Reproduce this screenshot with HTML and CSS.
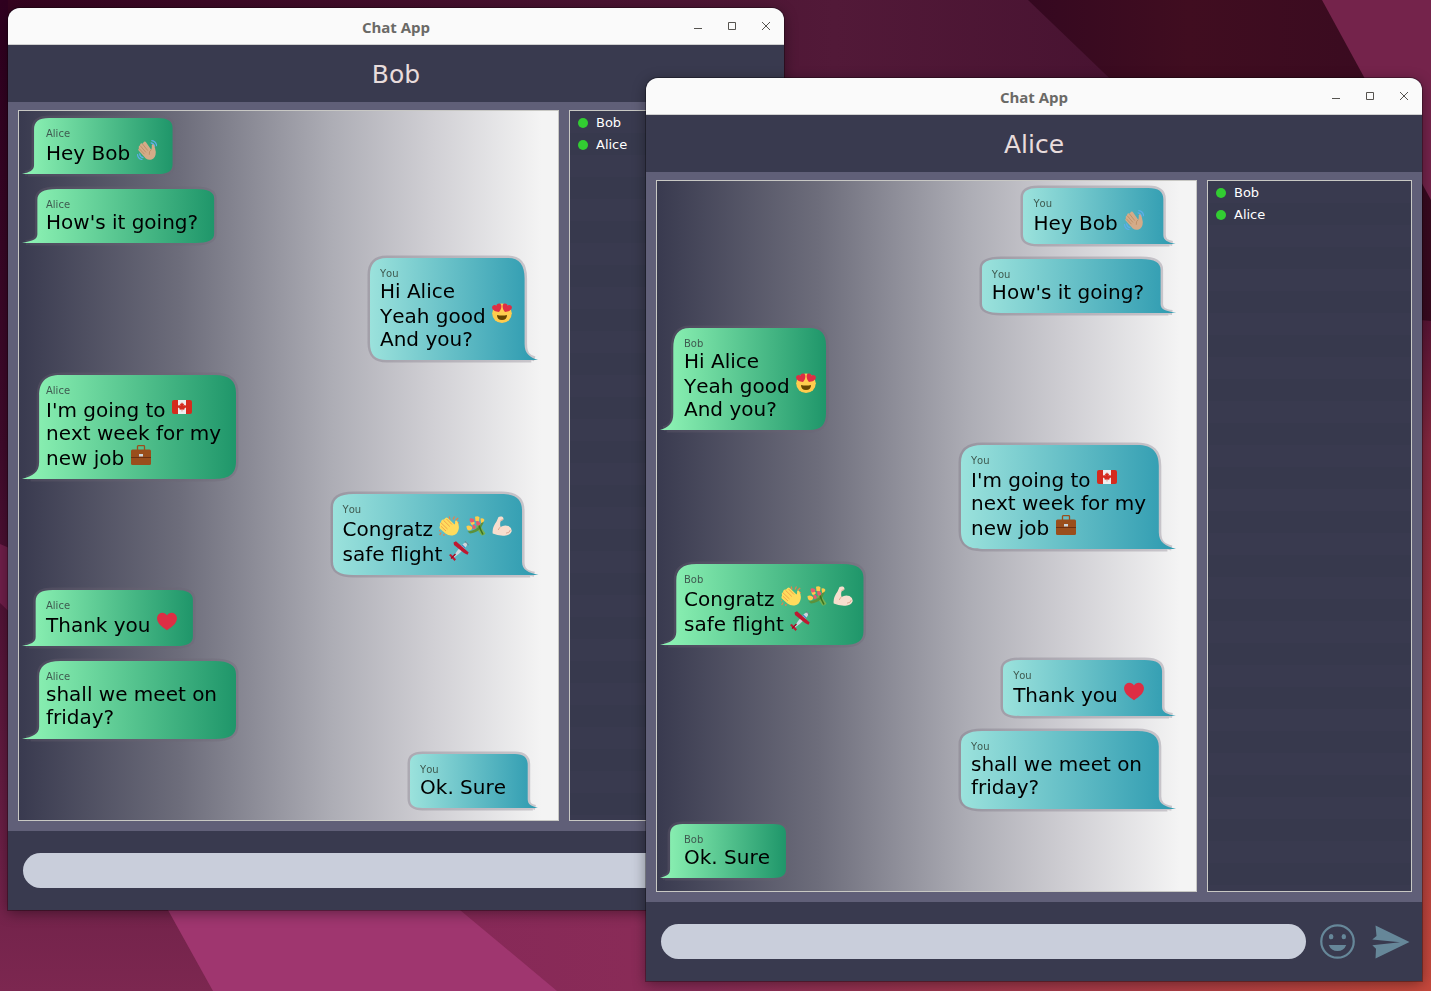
FILE: index.html
```html
<!DOCTYPE html>
<html lang="en">
<head>
<meta charset="utf-8">
<meta name="viewport" content="width=device-width, initial-scale=1">
<title>Chat App</title>
<link rel="stylesheet" href="styles.css">
</head>
<body>
<svg class="sprite" width="0" height="0" aria-hidden="true">
  <defs>
    <linearGradient id="green"><stop offset="0" stop-color="#90f5b6"/><stop offset="1" stop-color="#1f966a"/></linearGradient>
    <linearGradient id="blue"><stop offset="0" stop-color="#9be2dc"/><stop offset="1" stop-color="#2d9ab0"/></linearGradient>
  </defs>
  <symbol id="shape-in" viewBox="0 0 100 100" preserveAspectRatio="none" overflow="visible">
    <path class="halo" d="M2 99C6 97 8 94 8 84V20C8 7 11 0 18 0H90C97 0 100 6 100 17V83C100 95 97 100 90 100H4"/>
    <path d="M0 100C5 97 8 94 8 84V20C8 7 11 0 18 0H90C97 0 100 6 100 17V83C100 95 97 100 90 100Z" fill="url(#green)"/>
  </symbol>
  <symbol id="shape-out" viewBox="0 0 100 100" preserveAspectRatio="none" overflow="visible">
    <path class="halo" d="M98 99C94 97 92 94 92 84V20C92 7 89 0 82 0H10C3 0 0 6 0 17V83C0 95 3 100 10 100H96"/>
    <path d="M100 100C95 97 92 94 92 84V20C92 7 89 0 82 0H10C3 0 0 6 0 17V83C0 95 3 100 10 100Z" fill="url(#blue)"/>
  </symbol>
  <symbol id="wave" viewBox="0 0 20 20">
    <g fill="none" stroke="#5dadec" stroke-width="1.2" stroke-linecap="round"><path d="M14 2.800Q17 3.400 17.600 6.400M14.800 .6Q19 1.200 19.600 5.600M.5 14.500Q1 18.900 5 19.500M2.600 13.800Q3 16.800 6 17.600"/></g>
    <path d="M1.400 10.200Q1 9 2 8.500L1.700 7Q1.700 5.700 3 5.600L3.300 4Q4.300 2.700 5.500 3.700L7 1.800Q8.400 1 9 2.300L14.200 9.800Q15 7.800 14.700 5.300Q15.300 3.800 16.800 4.700Q18.400 8 18.800 12Q18.800 17.700 14.600 19.600Q11.300 20.400 8.800 18.500Z" fill="#d4ab88"/>
    <path d="M3.300 5.800L9 12.500M5.500 4L10.800 10.600M2.200 8.700L7.500 14.200M14.200 9.800Q11.800 11 12.300 14.800" fill="none" stroke="#b78b60" stroke-width=".8"/>
  </symbol>
  <symbol id="hearteyes" viewBox="0 0 20 20">
    <circle cx="10" cy="10.200" r="9.800" fill="#ffcc4d"/>
    <path d="M7 9C3.500 8.800 .6 7.300 .1 4.800C-.3 2.200 2.800 1 4.400 2.600C4.700 .2 8.300-.4 9.200 2C9.900 4.400 8.700 7.200 7 9Z" fill="#dd2e44"/>
    <path d="M13 9C16.500 8.800 19.400 7.300 19.900 4.800C20.300 2.200 17.200 1 15.600 2.600C15.300 .2 11.700-.4 10.800 2C10.100 4.400 11.300 7.200 13 9Z" fill="#dd2e44"/>
    <path d="M5 12Q10 13.200 15 12Q15 17 10 17T5 12Z" fill="#664500"/>
  </symbol>
  <symbol id="canada" viewBox="0 0 20 20">
    <rect y="3" width="20" height="14" rx="2" fill="#d52b1e"/><path d="M6 3h8v14H6z" fill="#eee"/>
    <path d="M10 5.200l1 1.700 1-.4-.3 2.400 1.200-1.100 .3 .7 1.300-.2-.5 1.300 .5 .4-2.300 1.800 .2 1-2.200-.3V14.500h-.4V12.500l-2.200 .3 .2-1-2.300-1.800 .5-.4-.5-1.300 1.300 .2 .3-.7 1.200 1.100L8 6.500l1 .4Z" fill="#d52b1e"/>
  </symbol>
  <symbol id="briefcase" viewBox="0 0 20 20">
    <path d="M6.500 5V1.500Q6.500 .7 7.300 .7H12.700Q13.500 .7 13.500 1.500V5" fill="none" stroke="#9a4e1c" stroke-width="1.300"/>
    <rect y="4.500" width="20" height="15.500" rx="1.500" fill="#9a4e1c"/><path d="M0 12h20v1H0z" fill="#6b2f12"/><rect x="8" y="9" width="4" height="2.500" fill="#ccd6dd"/>
  </symbol>
  <symbol id="clap" viewBox="0 0 20 20">
    <path d="M11 3.500L10.200 .5M14 3.400L15.500 .4M16.500 4.500L19.200 2M17.500 7L20 6.500M1 14.500L0 15M2.200 16.500L.6 19M5 18L4.800 20" stroke="#e8804c" stroke-width="1.200"/>
    <path d="M1 8.500Q.3 7 1.800 6.500L2.500 4.500Q3.500 3 5 3.600L6.500 2Q8 1 9 2.200L15.500 8.500Q16.300 7.500 16.100 5.300Q16.800 3.800 18.200 5Q20.400 9 19.700 13Q18.800 18.500 13.500 19.500Q9.500 20 6.500 17.500L.8 12.500Q0 10.500 1 10Z" fill="#ffdc5d"/>
    <path d="M2 6.800L8.500 13M4.500 4.300L10.800 10.500M7.500 3L13 8.500M2 10.300L7 15" stroke="#ef9645" stroke-width=".8"/>
  </symbol>
  <symbol id="bouquet" viewBox="0 0 20 20">
    <path d="M11 8L14 8.500Q16 13 19.500 17.500Q18 20 15.500 19.500Q12.500 15 10 12Z" fill="#77b255"/>
    <path d="M1.500 15.500Q8 15 13 10.500L17 4.500L17.500 7L14.500 12.500Q10 17 4 17.500Z" fill="#5c913b"/>
    <path d="M13 9.500Q14.500 14 17 18.500" stroke="#3e721d" stroke-width="1.500" fill="none"/>
    <path d="M9 .8Q11.500-.5 13.500 1.200L13 5.500L9.500 5ZM14.500 2.500Q17.500 1.500 18.500 4Q18 6.500 15 7ZM.5 10Q3.500 8.500 6 11Q6.500 14.500 3 14.500Q.5 14 .5 10ZM4.500 5Q7 4 9 7L6.500 9.500Q4 8.500 4.500 5Z" fill="#ffcc4d"/>
    <path d="M3.800 2.500Q7 1.500 8.500 4Q8.200 6.500 5.500 6.500Q3 5.500 3.800 2.500ZM10.500 5Q13.500 4.500 14.500 7.500Q14 10 11.500 9.500Q9.500 8.500 10.500 5ZM6.500 8.500Q10 8.500 9.800 12Q8 13.500 6.500 12.500Z" fill="#ea596e"/>
  </symbol>
  <symbol id="bicep" viewBox="0 0 20 20">
    <path d="M4.500 5.500L6.500 1Q8 0 10 .6Q12 1.600 11.300 3.700L8.500 5.600Q7.800 8 8.500 11Q12 8.500 16.500 10Q20.200 12 19.600 15.500Q18 19.500 12.500 19.700Q5.500 20 .7 17.600Q-.2 12 4.500 5.500Z" fill="#f7dece"/>
    <path d="M8.500 4.600L11 3.500M8.500 11Q6.700 12 6.300 14M14 17.200Q18 16.800 18.300 14" fill="none" stroke="#e0aa94" stroke-width="1"/>
  </symbol>
  <symbol id="airplane" viewBox="0 0 20 20">
    <path d="M3 18Q8 9 14 3Q17.500 .5 18.300 2.200Q18.500 5 15.500 7.500Q10 13.500 3 18Z" fill="#ccd6dd"/>
    <path d="M4.500 1.500L7 .3L19.700 11.500L18.500 13.800L15 12L5 4ZM0 14L1.800 13L7 18.200L5.500 20Z" fill="#be1931"/>
    <path d="M13 4L16 7" stroke="#4289c1" stroke-width="1.500"/><path d="M15.800 .3L19.700 4" stroke="#66757f" stroke-width="1"/>
    <path d="M2 17.500L6.500 13" stroke="#a0041e" stroke-width="1.200"/>
  </symbol>
  <symbol id="heart" viewBox="0 0 20 20">
    <path d="M10 18.200C4 14.500-.4 10.500 .1 5.500C.7 .4 7.500-1 10 3.500C12.500-1 19.300 .4 19.900 5.500C20.400 10.500 16 14.500 10 18.200Z" fill="#dd2e44"/>
  </symbol>
  <symbol id="smile" viewBox="0 0 36 36">
    <circle cx="18" cy="18" r="16.700" fill="none" stroke="currentColor" stroke-width="2.300"/>
    <ellipse cx="11.500" cy="13" rx="2.300" ry="2.700" fill="currentColor"/><ellipse cx="24.500" cy="13" rx="2.300" ry="2.700" fill="currentColor"/>
    <path d="M9 21.500H27Q24.500 27.800 18 27.800T9 21.500Z" fill="currentColor"/>
  </symbol>
  <symbol id="send" viewBox="0 0 38 34">
    <path d="M3.500 .5L37.500 17L3.500 33.500L4 23.800L.3 20.300L28 17.300L.3 14.500L4.500 11Z" fill="currentColor"/>
  </symbol>
</svg>

<svg class="wallpaper" viewBox="0 0 1431 991" preserveAspectRatio="none" aria-hidden="true">
  <defs>
    <linearGradient id="base" x1="0" y1="0" x2="0" y2="1"><stop offset="0" stop-color="#2f001f"/><stop offset=".45" stop-color="#410b2c"/><stop offset="1" stop-color="#7c2750"/></linearGradient>
    <linearGradient id="top"><stop offset="0" stop-color="#35041f"/><stop offset=".75" stop-color="#521938"/><stop offset="1" stop-color="#481331"/></linearGradient>
    <linearGradient id="dark"><stop offset="0" stop-color="#350820"/><stop offset=".4" stop-color="#400d20"/><stop offset="1" stop-color="#380a20"/></linearGradient>
    <linearGradient id="right" x1="0" y1="0" x2="0" y2="1"><stop offset="0" stop-color="#551234"/><stop offset=".2" stop-color="#862840"/><stop offset=".6" stop-color="#ab3c41"/><stop offset="1" stop-color="#c5483c"/></linearGradient>
    <linearGradient id="floor"><stop offset="0" stop-color="#862858"/><stop offset=".3" stop-color="#8a2c57"/><stop offset="1" stop-color="#c5483c"/></linearGradient>
  </defs>
  <path d="M0 0H1431V991H0Z" fill="url(#base)"/>
  <path d="M8 0H1110V300H8Z" fill="url(#top)"/>
  <path d="M0 544L60 570V660L0 603Z" fill="#701f4a"/>
  <path d="M1028 0H1431V330L1330 290Z" fill="url(#dark)"/>
  <path d="M1322 0H1431V200Z" fill="#74234b"/>
  <path d="M1300 309L1431 321V991H1300Z" fill="url(#right)"/>
  <path d="M400 860H1415V991H400Z" fill="url(#floor)"/>
  <path d="M140 860L168 910L213 991H557L400 860Z" fill="#9f366f"/>
</svg>

<main class="desktop">
  <section class="window window--bob" aria-label="Chat window of Bob">
    <div class="titlebar">
      <span class="titlebar__text">Chat App</span>
      <div class="titlebar__buttons">
        <button type="button" aria-label="Minimize"><svg viewBox="0 0 10 10"><path d="M1 7.500H9"/></svg></button>
        <button type="button" aria-label="Maximize"><svg viewBox="0 0 10 10"><path d="M1.500 1.500H8.500V8.500H1.500Z"/></svg></button>
        <button type="button" aria-label="Close"><svg viewBox="0 0 10 10"><path d="M1 1L9 9M9 1L1 9"/></svg></button>
      </div>
    </div>
    <h1 class="header">Bob</h1>
    <div class="content">
      <div class="chat">
        <article class="bubble bubble--in"><svg class="bubble__shape"><use href="#shape-in"/></svg><p class="bubble__name">Alice</p><p class="bubble__text">Hey Bob <svg class="emoji" role="img" aria-label="waving hand"><use href="#wave"/></svg></p></article>
        <article class="bubble bubble--in"><svg class="bubble__shape"><use href="#shape-in"/></svg><p class="bubble__name">Alice</p><p class="bubble__text">How's it going?</p></article>
        <article class="bubble bubble--out bubble--snug"><svg class="bubble__shape"><use href="#shape-out"/></svg><p class="bubble__name">You</p><p class="bubble__text">Hi Alice<br>Yeah good <svg class="emoji" role="img" aria-label="heart eyes"><use href="#hearteyes"/></svg><br>And you?</p></article>
        <article class="bubble bubble--in bubble--wrapped"><svg class="bubble__shape"><use href="#shape-in"/></svg><p class="bubble__name">Alice</p><p class="bubble__text">I'm going to <svg class="emoji" role="img" aria-label="flag of Canada"><use href="#canada"/></svg><br>next week for my<br>new job <svg class="emoji" role="img" aria-label="briefcase"><use href="#briefcase"/></svg></p></article>
        <article class="bubble bubble--out bubble--snug"><svg class="bubble__shape"><use href="#shape-out"/></svg><p class="bubble__name">You</p><p class="bubble__text">Congratz <svg class="emoji" role="img" aria-label="clapping hands"><use href="#clap"/></svg> <svg class="emoji" role="img" aria-label="bouquet"><use href="#bouquet"/></svg> <svg class="emoji" role="img" aria-label="flexed biceps"><use href="#bicep"/></svg><br>safe flight <svg class="emoji" role="img" aria-label="small airplane"><use href="#airplane"/></svg></p></article>
        <article class="bubble bubble--in"><svg class="bubble__shape"><use href="#shape-in"/></svg><p class="bubble__name">Alice</p><p class="bubble__text">Thank you <svg class="emoji" role="img" aria-label="red heart"><use href="#heart"/></svg></p></article>
        <article class="bubble bubble--in bubble--wrapped"><svg class="bubble__shape"><use href="#shape-in"/></svg><p class="bubble__name">Alice</p><p class="bubble__text">shall we meet on<br>friday?</p></article>
        <article class="bubble bubble--out"><svg class="bubble__shape"><use href="#shape-out"/></svg><p class="bubble__name">You</p><p class="bubble__text">Ok. Sure</p></article>
      </div>
      <ul class="users"><li>Bob</li><li>Alice</li></ul>
    </div>
    <form class="composer">
      <input class="composer__input" type="text" aria-label="Message">
      <button class="composer__smile" type="button" aria-label="Insert emoji"><svg><use href="#smile"/></svg></button>
      <button class="composer__send" type="button" aria-label="Send"><svg><use href="#send"/></svg></button>
    </form>
  </section>

  <section class="window window--alice" aria-label="Chat window of Alice">
    <div class="titlebar">
      <span class="titlebar__text">Chat App</span>
      <div class="titlebar__buttons">
        <button type="button" aria-label="Minimize"><svg viewBox="0 0 10 10"><path d="M1 7.500H9"/></svg></button>
        <button type="button" aria-label="Maximize"><svg viewBox="0 0 10 10"><path d="M1.500 1.500H8.500V8.500H1.500Z"/></svg></button>
        <button type="button" aria-label="Close"><svg viewBox="0 0 10 10"><path d="M1 1L9 9M9 1L1 9"/></svg></button>
      </div>
    </div>
    <h1 class="header">Alice</h1>
    <div class="content">
      <div class="chat">
        <article class="bubble bubble--out"><svg class="bubble__shape"><use href="#shape-out"/></svg><p class="bubble__name">You</p><p class="bubble__text">Hey Bob <svg class="emoji" role="img" aria-label="waving hand"><use href="#wave"/></svg></p></article>
        <article class="bubble bubble--out"><svg class="bubble__shape"><use href="#shape-out"/></svg><p class="bubble__name">You</p><p class="bubble__text">How's it going?</p></article>
        <article class="bubble bubble--in bubble--snug"><svg class="bubble__shape"><use href="#shape-in"/></svg><p class="bubble__name">Bob</p><p class="bubble__text">Hi Alice<br>Yeah good <svg class="emoji" role="img" aria-label="heart eyes"><use href="#hearteyes"/></svg><br>And you?</p></article>
        <article class="bubble bubble--out bubble--wrapped"><svg class="bubble__shape"><use href="#shape-out"/></svg><p class="bubble__name">You</p><p class="bubble__text">I'm going to <svg class="emoji" role="img" aria-label="flag of Canada"><use href="#canada"/></svg><br>next week for my<br>new job <svg class="emoji" role="img" aria-label="briefcase"><use href="#briefcase"/></svg></p></article>
        <article class="bubble bubble--in bubble--snug"><svg class="bubble__shape"><use href="#shape-in"/></svg><p class="bubble__name">Bob</p><p class="bubble__text">Congratz <svg class="emoji" role="img" aria-label="clapping hands"><use href="#clap"/></svg> <svg class="emoji" role="img" aria-label="bouquet"><use href="#bouquet"/></svg> <svg class="emoji" role="img" aria-label="flexed biceps"><use href="#bicep"/></svg><br>safe flight <svg class="emoji" role="img" aria-label="small airplane"><use href="#airplane"/></svg></p></article>
        <article class="bubble bubble--out"><svg class="bubble__shape"><use href="#shape-out"/></svg><p class="bubble__name">You</p><p class="bubble__text">Thank you <svg class="emoji" role="img" aria-label="red heart"><use href="#heart"/></svg></p></article>
        <article class="bubble bubble--out bubble--wrapped"><svg class="bubble__shape"><use href="#shape-out"/></svg><p class="bubble__name">You</p><p class="bubble__text">shall we meet on<br>friday?</p></article>
        <article class="bubble bubble--in"><svg class="bubble__shape"><use href="#shape-in"/></svg><p class="bubble__name">Bob</p><p class="bubble__text">Ok. Sure</p></article>
      </div>
      <ul class="users"><li>Bob</li><li>Alice</li></ul>
    </div>
    <form class="composer">
      <input class="composer__input" type="text" aria-label="Message">
      <button class="composer__smile" type="button" aria-label="Insert emoji"><svg><use href="#smile"/></svg></button>
      <button class="composer__send" type="button" aria-label="Send"><svg><use href="#send"/></svg></button>
    </form>
  </section>
</main>
</body>
</html>
```
FILE: styles.css
```css
* { box-sizing: border-box; }

body {
  margin: 0;
  background: #2f001f;
  font-family: "DejaVu Sans", sans-serif;
  font-kerning: none;
}

h1, p, ul { margin: 0; padding: 0; font-weight: normal; }

button {
  padding: 0;
  border: 0;
  background: none;
  color: inherit;
  cursor: pointer;
}

.sprite { position: absolute; }

.wallpaper {
  position: fixed;
  inset: 0;
  width: 100%;
  height: 100%;
}

/* Desktop with free-floating windows */
.desktop {
  position: relative;
  height: 100vh;
  overflow: hidden;
}

.window {
  position: absolute;
  display: flex;
  flex-direction: column;
  border-radius: 12px 12px 0 0;
  overflow: hidden;
  background: #605f78;
  box-shadow: 0 0 0 1px rgba(0, 0, 0, .3), 0 3px 14px rgba(0, 0, 0, .4);
}
.window--bob { inset: 8px 647px 81px 8px; }
.window--alice { inset: 78px 9px 10px 646px; }

.titlebar {
  display: grid;
  grid-template-columns: 1fr auto 1fr;
  align-items: center;
  height: 37px;
  flex: none;
  background: #fafafa;
  border-bottom: 1px solid #d0d0d0;
}
.titlebar__text {
  grid-column: 2;
  padding-top: 2px;
  font: bold 15px/20px "Open Sans", "Noto Sans", sans-serif;
  color: #6a6966;
}
.titlebar__buttons {
  display: flex;
  justify-content: flex-end;
  padding-right: 1px;
}
.titlebar__buttons button {
  display: grid;
  place-items: center;
  width: 34px;
  height: 34px;
}
.titlebar__buttons svg {
  width: 10px;
  height: 10px;
  fill: none;
  stroke: #55534f;
  stroke-width: 1;
}

.header {
  flex: none;
  padding-top: 2px;
  background: #393a4f;
  color: #e8dcdc;
  font-size: 25px;
  line-height: 55px;
  text-align: center;
}

.content {
  flex: 1;
  min-height: 0;
  display: grid;
  grid-template-columns: 1fr 205px;
  gap: 10px;
  padding: 8px 10px 10px;
}

.chat {
  display: flex;
  flex-direction: column;
  align-items: flex-start;
  gap: 15px;
  padding: 7px 20px 7px 3px;
  border: 1px solid #c8c8c4;
  background: linear-gradient(to right, #393a4f, #6d6d7b 30%, #adadb5 58%, #cfced3 76%, #f4f4f4 97%);
  overflow: auto;
}

.bubble {
  position: relative;
  flex: none;
  padding: 10px 16px 9px 24px;
}
.bubble--snug { padding-right: 10px; }
.bubble--out {
  align-self: flex-end;
  padding: 10px 32px 9px 10px;
}
.bubble--out.bubble--snug { padding-right: 26px; }
.bubble--wrapped { width: 214px; min-height: 78px; }
.bubble--out.bubble--wrapped { width: 215px; }

.bubble__shape {
  position: absolute;
  inset: 0;
  width: 100%;
  height: 100%;
  overflow: visible;
}
.halo {
  fill: none;
  stroke: rgba(110, 100, 115, .3);
  stroke-width: 5px;
  stroke-linejoin: round;
  vector-effect: non-scaling-stroke;
}
.bubble__name {
  position: relative;
  font-size: 10px;
  line-height: 12px;
  color: #3f5a50;
}
.bubble__text {
  position: relative;
  font-size: 20px;
  line-height: 23px;
  color: #000;
  white-space: nowrap;
}
.emoji {
  width: 20px;
  height: 20px;
  vertical-align: baseline;
}

.users {
  list-style: none;
  border: 1px solid #c8c8c4;
  background: repeating-linear-gradient(#393a4f 0 22px, #37394d 22px 44px);
}
.users li {
  display: flex;
  align-items: center;
  gap: 8px;
  padding: 1px 0 0 8px;
  font-size: 13px;
  line-height: 21px;
  color: #fff;
}
.users li::before {
  content: "";
  width: 10px;
  height: 10px;
  border-radius: 50%;
  background: #32cd32;
}

.composer {
  flex: none;
  display: flex;
  align-items: center;
  padding: 22px 12px 22px 15px;
  background: #393a4f;
  color: #668799;
}
.composer__input {
  flex: 1;
  min-width: 0;
  height: 35px;
  padding: 0 16px;
  border: 0;
  border-radius: 18px;
  background: #c9cedb;
  font: 16px "DejaVu Sans", sans-serif;
}
.composer svg { display: block; width: 100%; height: 100%; }
.composer__smile { width: 35px; height: 35px; margin: 0 17px 0 14px; }
.composer__send { width: 38px; height: 34px; }
```
